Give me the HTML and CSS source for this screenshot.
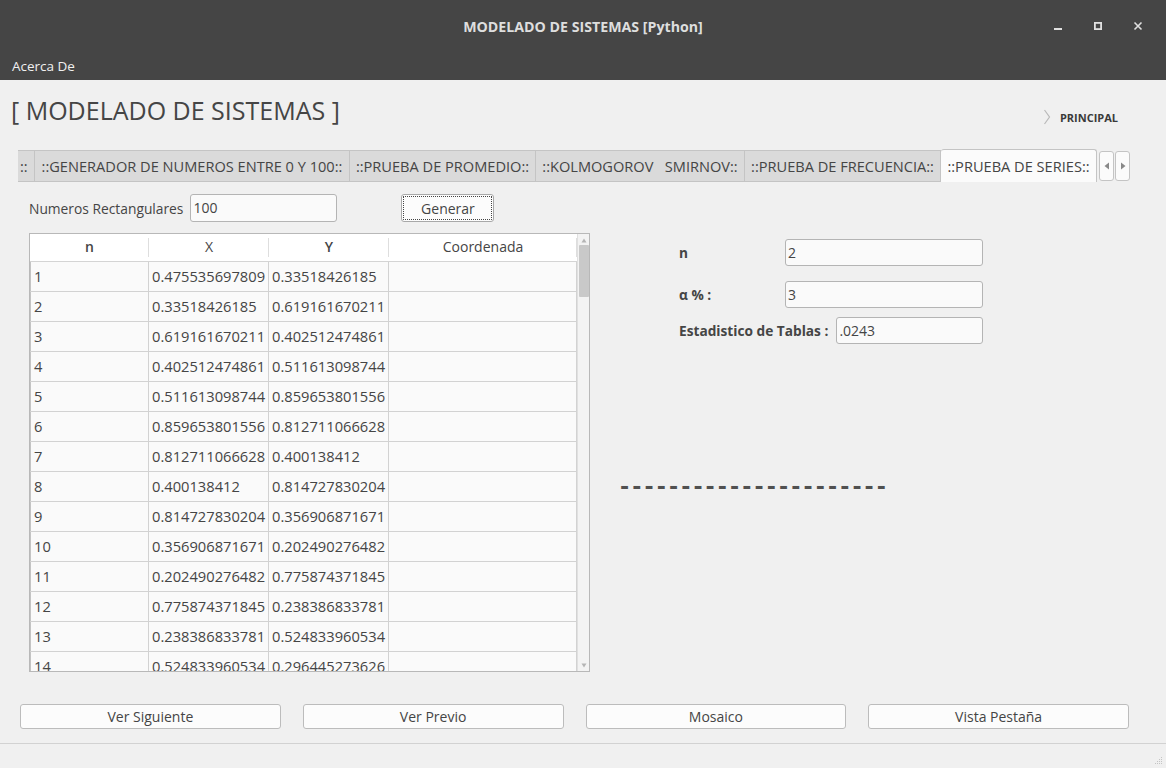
FILE: index.html
```html
<!DOCTYPE html>
<html lang="es">
<head>
<meta charset="utf-8">
<title>MODELADO DE SISTEMAS [Python]</title>
<link rel="stylesheet" href="styles.css">
</head>
<body>
<div class="titlebar">
  <div class="tb-spacer"></div>
  <div class="title">MODELADO DE SISTEMAS [Python]</div>
  <div class="win-controls">
    <span class="wc"><svg width="10" height="10" viewBox="0 0 10 10"><rect x="1" y="7" width="8" height="2" fill="#e0e0e0"/></svg></span>
    <span class="wc"><svg width="10" height="10" viewBox="0 0 10 10"><rect x="1.9" y="1.9" width="6.2" height="6.2" fill="none" stroke="#e0e0e0" stroke-width="1.8"/></svg></span>
    <span class="wc"><svg width="10" height="10" viewBox="0 0 10 10"><path d="M1.5 1.5 L8.5 8.5 M8.5 1.5 L1.5 8.5" stroke="#e0e0e0" stroke-width="1.6"/></svg></span>
  </div>
</div>
<div class="menubar"><span class="menu-item">Acerca De</span></div>

<div class="head">
  <h1 class="app-title">[ MODELADO DE SISTEMAS ]</h1>
  <div class="principal">
    <svg class="chev" width="8" height="16" viewBox="0 0 8 16"><polyline points="1.5,1 6.5,8 1.5,15" fill="none" stroke="#b9b9b9" stroke-width="1.2"/></svg>
    <span>PRINCIPAL</span>
  </div>
</div>

<div class="tabs">
  <div class="tab tab-cut">::</div>
  <div class="tab w1">::GENERADOR DE NUMEROS ENTRE 0 Y 100::</div>
  <div class="tab w2">::PRUEBA DE PROMEDIO::</div>
  <div class="tab w3">::KOLMOGOROV &nbsp; SMIRNOV::</div>
  <div class="tab w4">::PRUEBA DE FRECUENCIA::</div>
  <div class="tab tab-sel">::PRUEBA DE SERIES::</div>
  <div class="tab-arrows">
    <span class="tarrow"><svg width="6" height="8" viewBox="0 0 6 8"><polygon points="5,0.5 5,7.5 0.5,4" fill="#888"/></svg></span>
    <span class="tarrow"><svg width="6" height="8" viewBox="0 0 6 8"><polygon points="1,0.5 1,7.5 5.5,4" fill="#888"/></svg></span>
  </div>
</div>

<div class="panel">
  <div class="left-col">
    <div class="gen-row">
      <label class="gen-label">Numeros Rectangulares</label>
      <div class="input gen-input">100</div>
      <div class="btn btn-focus">Generar</div>
    </div>
    <div class="table">
      <div class="table-main">
        <div class="thead">
          <div class="th b">n</div>
          <div class="th">X</div>
          <div class="th b">Y</div>
          <div class="th last">Coordenada</div>
        </div>
        <div class="tbody">
          <div class="tr"><div class="td">1</div><div class="td">0.475535697809</div><div class="td">0.33518426185</div><div class="td"></div></div>
          <div class="tr"><div class="td">2</div><div class="td">0.33518426185</div><div class="td">0.619161670211</div><div class="td"></div></div>
          <div class="tr"><div class="td">3</div><div class="td">0.619161670211</div><div class="td">0.402512474861</div><div class="td"></div></div>
          <div class="tr"><div class="td">4</div><div class="td">0.402512474861</div><div class="td">0.511613098744</div><div class="td"></div></div>
          <div class="tr"><div class="td">5</div><div class="td">0.511613098744</div><div class="td">0.859653801556</div><div class="td"></div></div>
          <div class="tr"><div class="td">6</div><div class="td">0.859653801556</div><div class="td">0.812711066628</div><div class="td"></div></div>
          <div class="tr"><div class="td">7</div><div class="td">0.812711066628</div><div class="td">0.400138412</div><div class="td"></div></div>
          <div class="tr"><div class="td">8</div><div class="td">0.400138412</div><div class="td">0.814727830204</div><div class="td"></div></div>
          <div class="tr"><div class="td">9</div><div class="td">0.814727830204</div><div class="td">0.356906871671</div><div class="td"></div></div>
          <div class="tr"><div class="td">10</div><div class="td">0.356906871671</div><div class="td">0.202490276482</div><div class="td"></div></div>
          <div class="tr"><div class="td">11</div><div class="td">0.202490276482</div><div class="td">0.775874371845</div><div class="td"></div></div>
          <div class="tr"><div class="td">12</div><div class="td">0.775874371845</div><div class="td">0.238386833781</div><div class="td"></div></div>
          <div class="tr"><div class="td">13</div><div class="td">0.238386833781</div><div class="td">0.524833960534</div><div class="td"></div></div>
          <div class="tr"><div class="td">14</div><div class="td">0.524833960534</div><div class="td">0.296445273626</div><div class="td"></div></div>
        </div>
      </div>
      <div class="vscroll">
        <svg class="sarrow" width="6" height="5" viewBox="0 0 6 5"><polygon points="3,0.5 5.5,4.5 0.5,4.5" fill="#b5b5b5"/></svg>
        <div class="thumb"></div>
        <div class="track-fill"></div>
        <svg class="sarrow" width="6" height="5" viewBox="0 0 6 5"><polygon points="0.5,0.5 5.5,0.5 3,4.5" fill="#b5b5b5"/></svg>
      </div>
    </div>
  </div>

  <div class="right-col">
    <div class="stats">
      <div class="frow">
        <span class="flabel fixed">n</span>
        <div class="input fin">2</div>
      </div>
      <div class="frow r2">
        <span class="flabel fixed">α % :</span>
        <div class="input fin">3</div>
      </div>
      <div class="frow r3">
        <span class="flabel">Estadistico de Tablas :</span>
        <div class="input fin grow">.0243</div>
      </div>
    </div>
    <div class="dashes">----------------------</div>
  </div>
</div>

<div class="actions">
  <div class="btn abtn">Ver Siguiente</div>
  <div class="btn abtn">Ver Previo</div>
  <div class="btn abtn">Mosaico</div>
  <div class="btn abtn">Vista Pestaña</div>
</div>

<div class="statusbar">
  <svg class="grip" width="10" height="10" viewBox="0 0 10 10" fill="#c4c4c4">
    <rect x="8" y="2" width="1" height="1"/>
    <rect x="6" y="4" width="1" height="1"/><rect x="8" y="4" width="1" height="1"/>
    <rect x="4" y="6" width="1" height="1"/><rect x="6" y="6" width="1" height="1"/><rect x="8" y="6" width="1" height="1"/>
    <rect x="2" y="8" width="1" height="1"/><rect x="4" y="8" width="1" height="1"/><rect x="6" y="8" width="1" height="1"/><rect x="8" y="8" width="1" height="1"/>
  </svg>
</div>
</body>
</html>
```

FILE: styles.css
```css
* { box-sizing: border-box; }
html, body { margin: 0; padding: 0; }
body {
  width: 1166px;
  height: 768px;
  overflow: hidden;
  background: #f0f0f0;
  font-family: "Open Sans", "DejaVu Sans", sans-serif;
  color: #454545;
  display: flex;
  flex-direction: column;
}

/* title bar */
.titlebar {
  height: 50px;
  background: #454545;
  display: flex;
  align-items: center;
  padding: 0 8px;
}
.tb-spacer { width: 120px; }
.title {
  flex: 1;
  text-align: center;
  font-weight: 700;
  font-size: 14.2px;
  color: #dedede;
  margin-top: 2px;
}
.win-controls { width: 120px; display: flex; }
.wc { width: 40px; height: 20px; display: flex; align-items: center; justify-content: center; margin-top: 2px; }

.menubar {
  height: 30px;
  background: #454545;
  display: flex;
  align-items: center;
  padding-left: 12px;
}
.menu-item { font-size: 13.5px; color: #f0f0f0; margin-top: 2px; }

/* heading */
.head {
  display: flex;
  padding: 15px 0 0 11px;
  height: 69px;
}
.app-title {
  margin: 0;
  font-weight: 400;
  font-size: 25px;
  line-height: 30px;
  color: #454545;
}
.principal {
  margin-left: auto;
  margin-right: 48px;
  margin-top: 14px;
  display: flex;
  align-items: center;
  height: 16px;
  font-size: 11px;
  font-weight: 700;
  color: #3a3a3a;
}
.chev { margin-right: 9px; }

/* tabs */
.tabs {
  margin-left: 18px;
  width: 1112px;
  height: 33px;
  display: flex;
  align-items: flex-end;
}
.tab {
  height: 32px;
  background: #dadada;
  border: 1px solid #c4c4c4;
  border-left: none;
  font-size: 14.6px;
  color: #454545;
  display: flex;
  align-items: center;
  justify-content: center;
  white-space: nowrap;
  overflow: hidden;
  flex: none;
}
.tab-cut { width: 17px; justify-content: flex-start; padding-left: 2px; border-left: none; border-radius: 0; }
.w1 { width: 315px; }
.w2 { width: 186px; }
.w3 { width: 209px; }
.w4 { width: 196px; }
.tab-sel {
  width: 156px;
  height: 33px;
  background: #fbfbfb;
  border: 1px solid #c4c4c4;
  border-left: none;
  border-bottom: none;
  border-radius: 3px 3px 0 0;
}
.tab-arrows { display: flex; gap: 1px; margin-left: 2px; align-self: center; margin-top: 1px; }
.tarrow {
  width: 15px;
  height: 30px;
  background: #fbfbfb;
  border: 1px solid #c4c4c4;
  border-radius: 3px;
  display: flex;
  align-items: center;
  justify-content: center;
}

/* panel */
.panel { display: flex; padding-top: 11px; }
.left-col { margin-left: 29px; width: 561px; }
.gen-row { display: flex; align-items: center; height: 30px; }
.gen-label { font-size: 13.8px; margin-right: 7px; }
.input {
  height: 28px;
  background: #fafafa;
  border: 1px solid #b4b4b4;
  border-radius: 3px;
  font-size: 14px;
  line-height: 26px;
  padding-left: 2px;
  color: #454545;
}
.gen-input { width: 147px; }
.btn {
  background: #fcfcfc;
  border: 1px solid #bcbcbc;
  border-radius: 3px;
  font-size: 14px;
  color: #454545;
  display: flex;
  align-items: center;
  justify-content: center;
}
.btn-focus {
  margin-left: 64px;
  width: 93px;
  height: 28px;
  outline: 1px dotted #444;
  outline-offset: -3px;
  border-color: #a8a8a8;
}

/* table */
.table {
  margin-top: 10px;
  height: 439px;
  border: 1px solid #b8b8b8;
  background: #fff;
  display: flex;
}
.table-main { width: 547px; overflow: hidden; }
.thead {
  display: grid;
  grid-template-columns: 119px 120px 120px 188px;
  height: 28px;
  background: #fff;
  border-bottom: 1px solid #d4d4d4;
}
.th {
  font-size: 14px;
  text-align: center;
  line-height: 26px;
  color: #454545;
  position: relative;
}
.th.b { font-weight: 600; }
.th::after {
  content: "";
  position: absolute;
  right: 0;
  top: 4px;
  bottom: 4px;
  width: 1px;
  background: #dedede;
}
.tbody { height: 409px; overflow: hidden; background: #fafafa; }
.tr {
  display: grid;
  grid-template-columns: 119px 120px 120px 188px;
  height: 30px;
  border-bottom: 1px solid #d2d2d2;
}
.td {
  font-size: 14.7px;
  line-height: 29px;
  padding-left: 3px;
  border-right: 1px solid #d2d2d2;
  white-space: nowrap;
  overflow: hidden;
  color: #454545;
}
.tr .td:first-child { border-left: 1px solid #c4c4c4; }
.vscroll {
  width: 12px;
  background: #f3f3f3;
  border-left: 1px solid #e0e0e0;
  display: flex;
  flex-direction: column;
  align-items: center;
  padding: 4px 0 3px;
}
.sarrow { flex: none; }
.thumb {
  width: 10px;
  height: 52px;
  margin-top: 2px;
  background: #c9c9c9;
  border-radius: 1px;
}
.track-fill { flex: 1; }

/* right side */
.right-col { flex: 1; }
.stats { margin-left: 89px; margin-top: 46px; width: 304px; }
.frow { display: flex; align-items: center; height: 27px; }
.r2 { margin-top: 15px; }
.r3 { margin-top: 9px; }
.flabel { font-size: 13.7px; font-weight: 700; color: #454545; white-space: nowrap; }
.flabel.fixed { width: 106px; }
.fin { height: 27px; width: 198px; line-height: 25px; }
.fin.grow { flex: 1; width: auto; margin-left: 8px; }
.dashes {
  margin-left: 30px;
  margin-top: 131px;
  font-family: "DejaVu Sans", sans-serif;
  font-weight: 700;
  font-size: 22px;
  line-height: 24px;
  letter-spacing: 3.1px;
  color: #505050;
  white-space: nowrap;
}

/* action buttons */
.actions {
  display: flex;
  gap: 22px;
  padding: 0 37px 0 20px;
  margin-top: 32px;
}
.abtn { flex: 1; height: 25px; }

/* status */
.statusbar {
  margin-top: auto;
  height: 25px;
  border-top: 1px solid #d2d2d2;
  display: flex;
  justify-content: flex-end;
  align-items: flex-end;
  padding: 0 3px 3px 0;
}
```
